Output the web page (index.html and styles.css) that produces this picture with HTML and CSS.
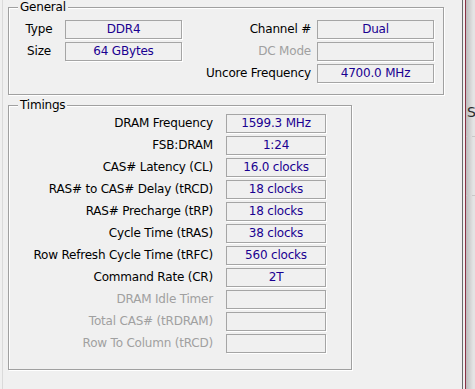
FILE: index.html
```html
<!doctype html>
<html>
<head>
  <link rel="stylesheet" href="styles.css">
</head>
<body>
<div class="window">
  <div class="tab">
    <fieldset class="group general">
      <legend>General</legend>
      <div class="general-grid">
        <span class="lbl">Type</span>
        <span class="val">DDR4</span>
        <span class="rlbl">Channel #</span>
        <span class="val">Dual</span>

        <span class="lbl">Size</span>
        <span class="val">64 GBytes</span>
        <span class="rlbl off">DC Mode</span>
        <span class="val"></span>

        <span></span>
        <span></span>
        <span class="rlbl">Uncore Frequency</span>
        <span class="val">4700.0 MHz</span>
      </div>
    </fieldset>

    <fieldset class="group timings">
      <legend>Timings</legend>
      <div class="timings-grid">
        <span class="tlbl">DRAM Frequency</span><span class="val">1599.3 MHz</span>
        <span class="tlbl">FSB:DRAM</span><span class="val">1:24</span>
        <span class="tlbl">CAS# Latency (CL)</span><span class="val">16.0 clocks</span>
        <span class="tlbl">RAS# to CAS# Delay (tRCD)</span><span class="val">18 clocks</span>
        <span class="tlbl">RAS# Precharge (tRP)</span><span class="val">18 clocks</span>
        <span class="tlbl">Cycle Time (tRAS)</span><span class="val">38 clocks</span>
        <span class="tlbl">Row Refresh Cycle Time (tRFC)</span><span class="val">560 clocks</span>
        <span class="tlbl">Command Rate (CR)</span><span class="val">2T</span>
        <span class="tlbl off">DRAM Idle Timer</span><span class="val"></span>
        <span class="tlbl off">Total CAS# (tRDRAM)</span><span class="val"></span>
        <span class="tlbl off">Row To Column (tRCD)</span><span class="val"></span>
      </div>
    </fieldset>
  </div>

  <div class="behind">
    <div class="dash top"></div>
    <span class="peek">S</span>
    <div class="dash"></div>
    <div class="dash low"></div>
  </div>
</div>
</body>
</html>
```

FILE: styles.css
```css
body {
  margin: 0;
  background: #f0f0f0;
  font-family: "DejaVu Sans", sans-serif;
  font-size: 12px;
  letter-spacing: -0.2px;
  color: #000;
}

.window {
  display: flex;
  height: 389px;
  overflow: hidden;
}

.tab {
  box-sizing: border-box;
  width: 461px;
  margin-left: 2px;
  padding-left: 5px;
  border-left: 1px solid #dadada;
  border-right: 1px solid #6b6b6b;
}

.group {
  box-sizing: border-box;
  margin: 0;
  padding: 0;
  border: 1px solid #a0a0a0;
  box-shadow: inset 1px 1px 0 #fff, 1px 1px 0 #fff;
  min-width: 0;
}
.group legend {
  margin-left: 9px;
  padding: 0 2px;
  line-height: 14px;
  background: #f0f0f0;
}

.general {
  width: 436px;
}
.timings {
  width: 344px;
  margin-top: 3px;
}

.general-grid {
  display: grid;
  grid-template-columns: 56px 117px 135px 117px;
  grid-auto-rows: 19px;
  row-gap: 3px;
  column-gap: 0;
  margin-top: 6px;
  padding-bottom: 11px;
}
.lbl {
  padding-left: 4px;
  text-align: center;
  line-height: 19px;
}
.rlbl {
  padding-right: 6px;
  text-align: right;
  line-height: 19px;
  white-space: nowrap;
}

.timings-grid {
  display: grid;
  grid-template-columns: 204px 100px;
  grid-auto-rows: 19px;
  row-gap: 3px;
  column-gap: 13px;
  margin-top: 2px;
  padding-bottom: 16px;
}
.tlbl {
  text-align: right;
  line-height: 19px;
  white-space: nowrap;
}

.val {
  box-sizing: border-box;
  height: 19px;
  line-height: 17px;
  border: 1px solid #a5a5a5;
  box-shadow: 1px 1px 0 #fff;
  text-align: center;
  color: #1a0090;
  white-space: nowrap;
}

.off {
  color: #a0a0a0;
}

.behind {
  flex: 1;
  margin-left: 2px;
  border-left: 1px solid #8a3346;
  background: linear-gradient(to right, #bdbdbd, #e4e4e4 80%);
  overflow: hidden;
}
.peek {
  display: block;
  padding-left: 1px;
  font-size: 14px;
  line-height: 20px;
  letter-spacing: 0;
  color: #2b2b2b;
}
.dash {
  height: 0;
  margin: 14px 0 0 0;
  border-top: 1px dashed #c8c8c8;
}
.dash.top {
  margin-top: 102px;
  margin-bottom: 0;
  border: 0;
}
.dash.low {
  margin-top: 58px;
}
```
